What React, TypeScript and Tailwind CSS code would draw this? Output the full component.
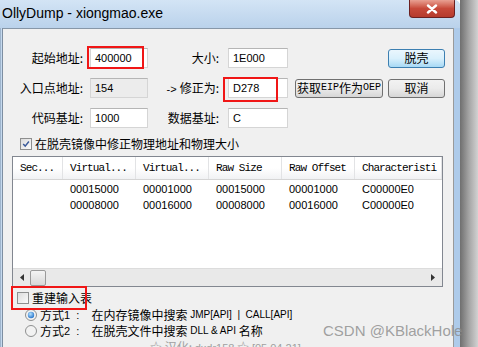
import type { ReactElement, ReactNode } from "react";

const cjk = "font-['Noto_Sans_CJK_SC',sans-serif]";
const latin = "font-['Liberation_Sans','Noto_Sans_CJK_SC',sans-serif]";

function Label({ children, w }: { children: ReactNode; w: string }): ReactElement {
  return (
    <div className={`${w} shrink-0 text-right text-[12px] leading-none text-black ${cjk}`}>
      {children}
    </div>
  );
}

function Field({
  value,
  w,
  ml,
  disabled,
  mark,
}: {
  value: string;
  w: string;
  ml: string;
  disabled?: boolean;
  mark?: string;
}): ReactElement {
  return (
    <div
      className={`relative ${w} ${ml} h-[20px] shrink-0 flex items-center pl-[4px] border border-[#d5d5d5] border-t-[#b5b5b5] text-[11px] text-black ${latin} ${
        disabled ? "bg-[#ececec]" : "bg-white"
      }`}
    >
      {value}
      {/* red annotation box drawn over the field */}
      {mark && <div className={`absolute border-2 border-[#f01616] ${mark}`} />}
    </div>
  );
}

function Btn({
  children,
  w,
  ml,
  focus,
}: {
  children: ReactNode;
  w: string;
  ml: string;
  focus?: boolean;
}): ReactElement {
  return (
    <div
      className={`${w} ${ml} h-[19px] shrink-0 flex items-center justify-center rounded-[3px] border text-[12px] leading-none text-black ${cjk} ${
        focus
          ? "border-[#3c7fb1] bg-linear-to-b from-[#eaf6fd] via-[#d9f0fc] to-[#a7d9f5]"
          : "border-[#707070] bg-linear-to-b from-[#f2f2f2] via-[#ebebeb] to-[#d6d6d6]"
      }`}
    >
      {children}
    </div>
  );
}

function Check({ checked }: { checked?: boolean }): ReactElement {
  return (
    <div className="w-[12px] h-[12px] shrink-0 border border-[#8e8f8f] bg-linear-to-br from-[#dcdcdc] to-[#fbfbfb] p-[1px]">
      {checked && (
        <svg viewBox="0 0 10 10" className="w-full h-full">
          <path d="M1.5 5 L4 7.6 L8.6 1.8" fill="none" stroke="#3a5a9a" strokeWidth="1.8" />
        </svg>
      )}
    </div>
  );
}

function Radio({ on }: { on?: boolean }): ReactElement {
  return (
    <svg viewBox="0 0 12 12" className="w-[12px] h-[12px] shrink-0">
      <defs>
        <radialGradient id="rg" cx="40%" cy="35%" r="70%">
          <stop offset="0%" stopColor="#b6e2ff" />
          <stop offset="100%" stopColor="#1f6fc8" />
        </radialGradient>
      </defs>
      <circle cx="6" cy="6" r="5.5" fill="#f2f2f2" stroke="#8e8f8f" />
      {on && <circle cx="6" cy="6" r="3.2" fill="url(#rg)" />}
    </svg>
  );
}

const cols = [
  { name: "Sec...", w: "w-[50px]" },
  { name: "Virtual...", w: "w-[73px]" },
  { name: "Virtual...", w: "w-[73px]" },
  { name: "Raw Size", w: "w-[73px]" },
  { name: "Raw Offset", w: "w-[73px]" },
  { name: "Characteristi", w: "w-[87px]" },
];

const rows = [
  ["", "00015000", "00001000", "00015000", "00001000", "C00000E0"],
  ["", "00008000", "00016000", "00008000", "00016000", "C00000E0"],
];

export default function App(): ReactElement {
  return (
    <div className="relative w-[478px] h-[347px] overflow-hidden flex bg-white">
      {/* Window */}
      <div className="w-[460px] h-full shrink-0 flex flex-col rounded-tr-[6px] overflow-hidden bg-[#b9d1ea]">
        {/* Title bar */}
        <div className="h-[28px] shrink-0 flex items-start bg-linear-to-b from-[#d3e4f5] to-[#bad2eb]">
          <div className={`pl-[2px] pt-[4px] text-[14px] leading-[18px] text-black font-['Liberation_Sans',sans-serif]`}>
            OllyDump - xiongmao.exe
          </div>
          <div className="ml-auto mr-[5px] w-[46px] h-[18px] flex items-center justify-center rounded-b-[4px] border border-t-0 border-[#6b2020] bg-linear-to-b from-[#e8a093] via-[#c7493a] to-[#b53a2c]">
            <svg viewBox="0 0 12 10" className="w-[12px] h-[10px]">
              <path d="M2 1.5 L10 8.5 M10 1.5 L2 8.5" stroke="#ffffff" strokeWidth="2.4" strokeLinecap="round" />
            </svg>
          </div>
        </div>

        {/* Body */}
        <div className="flex-1 flex">
          <div className="w-[3px] shrink-0 border-l border-r border-l-[#9eb4cc] border-r-[#7d8ea1] bg-[#c5d9ee]" />
          <div className="w-[450px] shrink-0 bg-[#f0f0f0] border-t border-[#8797a8] flex flex-col pt-[19px] relative">
            {/* Row 1 */}
            <div className="flex items-center h-[20px]">
              <Label w="w-[80px]">起始地址:</Label>
              <Field value="400000" w="w-[58px]" ml="ml-[7px]" mark="-left-[4px] -top-[3px] w-[57px] h-[23px]" />
              <Label w="w-[71px]">大小:</Label>
              <Field value="1E000" w="w-[60px]" ml="ml-[9px]" />
              <Btn w="w-[57px]" ml="ml-[100px]" focus>
                脱壳
              </Btn>
            </div>

            {/* Row 2 */}
            <div className="flex items-center h-[20px] mt-[10px]">
              <Label w="w-[80px]">入口点地址:</Label>
              <Field value="154" w="w-[58px]" ml="ml-[7px]" disabled />
              <Label w="w-[71px]">
                <span className={`text-[11px] ${latin}`}>-&gt; </span>修正为:
              </Label>
              <Field value="D278" w="w-[60px]" ml="ml-[9px]" mark="-left-[6px] -top-[2px] w-[55px] h-[25px]" />
              <Btn w="w-[88px]" ml="ml-[7px]">
                获取<span className="font-['Liberation_Mono',monospace] text-[10px] tracking-[0px]">EIP</span>作为
                <span className="font-['Liberation_Mono',monospace] text-[10px]">OEP</span>
              </Btn>
              <Btn w="w-[57px]" ml="ml-[5px]">
                取消
              </Btn>
            </div>

            {/* Row 3 */}
            <div className="flex items-center h-[20px] mt-[10px]">
              <Label w="w-[80px]">代码基址:</Label>
              <Field value="1000" w="w-[58px]" ml="ml-[7px]" />
              <Label w="w-[71px]">数据基址:</Label>
              <Field value="C" w="w-[60px]" ml="ml-[9px]" />
            </div>

            {/* Fix checkbox */}
            <div className="flex items-center h-[12px] mt-[10px] ml-[17px]">
              <Check checked />
              <div className={`ml-[3px] text-[12px] leading-none text-black ${cjk}`}>
                在脱壳镜像中修正物理地址和物理大小
              </div>
            </div>

            {/* Section list */}
            <div className="ml-[9px] mt-[6px] w-[431px] h-[131px] shrink-0 border border-[#828790] bg-white flex flex-col">
              <div className="h-[23px] shrink-0 flex bg-linear-to-b from-white via-white to-[#f1f2f4] border-b border-[#d5d5d5]">
                {cols.map((c, i) => (
                  <div
                    key={i}
                    className={`${c.w} shrink-0 flex items-center pl-[7px] overflow-hidden whitespace-nowrap border-r border-[#e2e3e5] text-[11px] tracking-[-0.9px] text-black font-['Liberation_Mono',monospace]`}
                  >
                    {c.name}
                  </div>
                ))}
                <div className="flex-1 my-[1px] border-y border-[#bfbfbf] bg-[#f0f0f0]" />
              </div>
              <div className="flex flex-col pt-[1px]">
                {rows.map((r, ri) => (
                  <div key={ri} className="h-[16px] flex items-center">
                    {r.map((v, ci) => (
                      <div
                        key={ci}
                        className={`${cols[ci].w} shrink-0 pl-[7px] text-[11px] leading-none text-black ${latin}`}
                      >
                        {v}
                      </div>
                    ))}
                  </div>
                ))}
              </div>
              <div className="mt-auto h-[18px] shrink-0 flex items-center bg-[#e9e9e9] border-t border-[#dcdcdc]">
                <svg viewBox="0 0 4 7" className="ml-[7px] w-[4px] h-[7px]">
                  <path d="M4 0 L0 3.5 L4 7 Z" fill="#333" />
                </svg>
                <div className="ml-[6px] w-[16px] h-[16px] rounded-[2px] border border-[#9a9a9a] bg-linear-to-b from-[#f4f4f4] to-[#d8d8d8]" />
                <svg viewBox="0 0 4 7" className="ml-auto mr-[7px] w-[4px] h-[7px]">
                  <path d="M0 0 L4 3.5 L0 7 Z" fill="#333" />
                </svg>
              </div>
            </div>

            {/* Rebuild import */}
            <div className="relative flex items-center h-[14px] mt-[4px] ml-[14px]">
              <Check />
              <div className={`ml-[3px] text-[12px] leading-none text-black ${cjk}`}>重建输入表</div>
              <div className="absolute -left-[6px] -top-[5px] w-[76px] h-[24px] border-2 border-[#f01616]" />
            </div>

            {/* Radios */}
            <div className="flex items-center h-[16px] mt-[2px] ml-[22px]">
              <Radio on />
              <div className="ml-[3px] flex items-center text-[12px] leading-none text-black">
                <span className={cjk}>方式</span>
                <span className={`text-[11px] ${latin} whitespace-pre`}>1  :  </span>
                <span className={`ml-[6px] ${cjk}`}>在内存镜像中搜索</span>
                <span className={`text-[10px] ${latin} whitespace-pre`}> JMP[API]  |  CALL[API]</span>
              </div>
            </div>
            <div className="flex items-center h-[16px] ml-[22px]">
              <Radio />
              <div className="ml-[3px] flex items-center text-[12px] leading-none text-black">
                <span className={cjk}>方式</span>
                <span className={`text-[11px] ${latin} whitespace-pre`}>2  :  </span>
                <span className={`ml-[6px] ${cjk}`}>在脱壳文件中搜索</span>
                <span className={`text-[10px] ${latin} whitespace-pre`}> DLL &amp; API </span>
                <span className={cjk}>名称</span>
              </div>
            </div>
            <div className={`ml-[147px] mt-[1px] whitespace-pre text-[12px] leading-[14px] text-[#a0a0a0] ${cjk}`}>
              ☆ 汉化: <span className={`text-[11px] ${latin}`}>dxdr158</span> ☆ <span className={`text-[11px] ${latin}`}>[05.04.21]</span>
            </div>
          </div>
          <div className="w-[7px] shrink-0 border-l border-[#9a9a9a] bg-[#aecbea]" />
        </div>
      </div>

      {/* Shadow area */}
      <div className="flex-1 bg-linear-to-r from-[#6f6f6f] via-[#a5a5a5] to-[#d2d2d2]" />

      {/* Watermark */}
      <div className="absolute left-[323px] top-[322px] text-[15px] leading-[18px] text-[#8a8a8a]/80 font-['Liberation_Sans',sans-serif] whitespace-nowrap">
        CSDN @KBlackHole
      </div>
    </div>
  );
}
